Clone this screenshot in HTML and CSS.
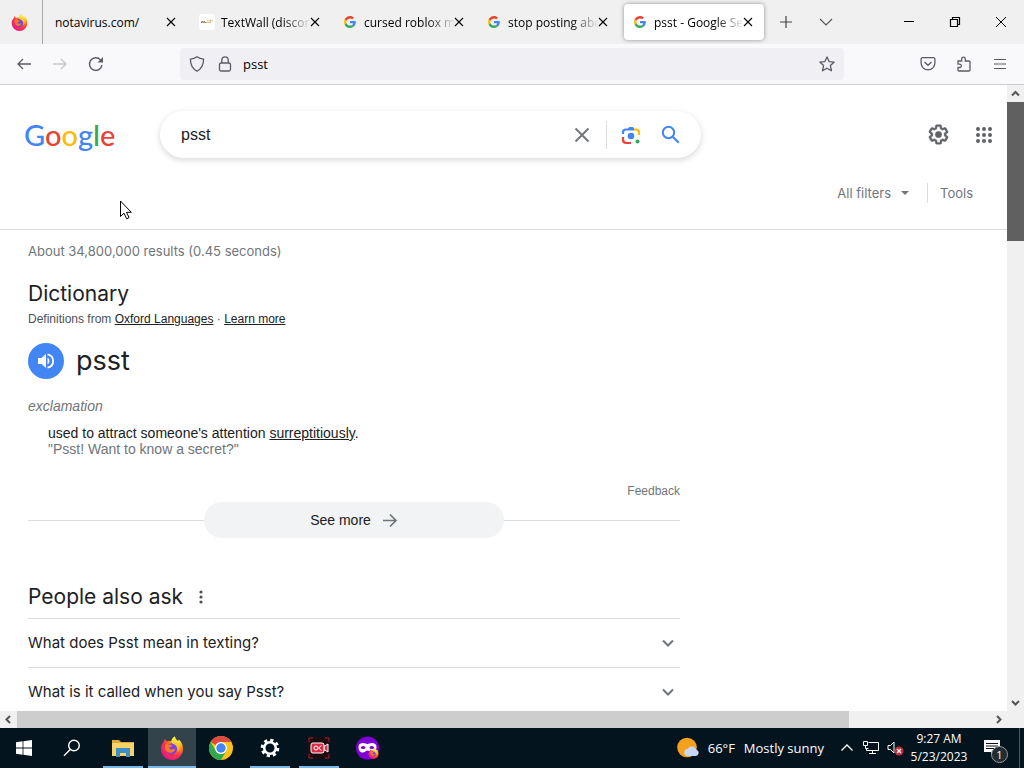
FILE: index.html
```
<!DOCTYPE html>
<html lang="en">
<head>
    <meta charset="utf-8">
    <title>psst - Google Search</title>
    <link rel="stylesheet" href="styles.css">
</head>
<body>
    <svg class="defs" aria-hidden="true">
        <defs>
            <radialGradient id="fox-body" cx="75%" cy="20%" r="90%">
                <stop offset="0" stop-color="#fff44f"/>
                <stop offset="0.35" stop-color="#ff980e"/>
                <stop offset="0.65" stop-color="#ff3647"/>
                <stop offset="1" stop-color="#e31587"/>
            </radialGradient>
            <linearGradient id="fox-flame" x1="0" y1="0" x2="0" y2="1">
                <stop offset="0" stop-color="#fff44f"/>
                <stop offset="1" stop-color="#ff980e"/>
            </linearGradient>
        </defs>
        <symbol id="close" viewBox="0 0 16 16"><path d="M4 4l8 8M12 4l-8 8" fill="none" stroke="currentColor" stroke-width="1.1"/></symbol>
        <symbol id="g" viewBox="0 0 48 48">
            <path fill="#ea4335" d="M24 9.5c3.54 0 6.71 1.22 9.21 3.6l6.85-6.85C35.9 2.38 30.47 0 24 0 14.62 0 6.51 5.38 2.56 13.22l7.98 6.19C12.43 13.72 17.74 9.5 24 9.5z"/>
            <path fill="#4285f4" d="M46.98 24.55c0-1.57-.15-3.09-.38-4.55H24v9.02h12.94c-.58 2.96-2.26 5.48-4.78 7.18l7.73 6c4.51-4.18 7.09-10.36 7.09-17.65z"/>
            <path fill="#fbbc05" d="M10.53 28.59c-.48-1.45-.76-2.99-.76-4.59s.27-3.14.76-4.59l-7.98-6.19C.92 16.46 0 20.12 0 24c0 3.88.92 7.54 2.56 10.78l7.97-6.19z"/>
            <path fill="#34a853" d="M24 48c6.48 0 11.93-2.13 15.89-5.81l-7.73-6c-2.15 1.45-4.92 2.3-8.16 2.3-6.26 0-11.57-4.22-13.47-9.91l-7.98 6.19C6.51 42.62 14.62 48 24 48z"/>
        </symbol>
        <symbol id="firefox" viewBox="0 0 24 24">
            <path fill="url(#fox-body)" d="M1 13C1 9 2.500 7 4 5.500l.5-2.500C5.500 3.500 6.500 4.500 7 5.500c1.500-.5 3-.6 4.500-.4C11.500 3 13 1.500 15 .5c0 2 1.500 3.200 3 4.500l1-1.500c3 3 4 6 4 9.500a11 11 0 0 1-22 0z"/>
            <circle cx="11.500" cy="12.800" r="5.600" fill="#7542e5"/>
            <path fill="url(#fox-flame)" d="M15 .5c0 2.500 1.500 3.500 3 5.500 2.500 3 2 8-.5 10.500 1-4-1-7.500-4-8.500-2-1-2.500-2-2-2.900C11.500 3 13 1.500 15 .5z"/>
            <path fill="#ff7a20" d="M5 8.500c2-.8 4 .2 5.500.2 2 0 2 1 1.500 1.600-.8.8-2 .7-2.600 1.300-.5.700.3 2 1.800 2 1.500.1 2.400-1 3.800-.4-.4 2-2.200 3.800-4.800 3.600C6.500 16.500 4.500 13 5 8.500z"/>
        </symbol>
        <symbol id="chevron" viewBox="0 0 16 16"><path d="M3 5.500l5 5 5-5" fill="none" stroke="currentColor" stroke-width="2"/></symbol>
        <symbol id="gear" viewBox="0 0 24 24"><path fill="currentColor" stroke="currentColor" stroke-width=".4" d="M13.850 22.250h-3.700c-.740 0-1.360-.540-1.450-1.270l-.27-1.890c-.27-.14-.53-.29-.79-.46l-1.800.720c-.7.260-1.470-.03-1.810-.65L2.200 15.530c-.35-.66-.2-1.440.36-1.880l1.530-1.190c-.01-.15-.02-.3-.02-.46 0-.15.010-.31.020-.46l-1.520-1.190c-.59-.45-.74-1.260-.37-1.880l1.850-3.190c.34-.62 1.110-.9 1.790-.63l1.810.73c.26-.17.520-.32.780-.46l.27-1.910c.09-.7.710-1.250 1.440-1.250h3.700c.74 0 1.360.540 1.450 1.270l.27 1.890c.27.140.53.290.79.460l1.800-.72c.71-.26 1.480.030 1.820.65l1.840 3.180c.36.660.2 1.440-.36 1.880l-1.520 1.190c.01.150.020.300.020.460s-.01.310-.02.460l1.520 1.190c.56.450.72 1.230.370 1.860l-1.860 3.220c-.34.620-1.110.900-1.800.630l-1.800-.72c-.26.170-.52.320-.78.460l-.27 1.910c-.1.680-.72 1.220-1.460 1.220zm-3.230-2h2.760l.37-2.550.53-.22c.44-.18.880-.44 1.340-.78l.45-.34 2.380.96 1.380-2.400-2.030-1.580.07-.56c.03-.26.060-.51.060-.78s-.03-.53-.06-.78l-.07-.56 2.030-1.580-1.390-2.400-2.390.96-.45-.35c-.42-.32-.87-.58-1.330-.77l-.52-.22-.37-2.550h-2.760l-.37 2.550-.53.210c-.44.190-.88.440-1.340.79l-.45.330-2.380-.95-1.390 2.390 2.030 1.580-.07.560a7 7 0 0 0-.06.790c0 .260.020.530.060.780l.07.560-2.030 1.580 1.380 2.400 2.390-.96.450.350c.43.330.86.580 1.330.770l.53.220z"/><circle cx="12" cy="12" r="3.500" fill="currentColor"/></symbol>
    </svg>

    <!-- tab strip -->
    <header class="tabs">
        <button class="pinned" aria-label="Firefox View"><svg width="17" height="17"><use href="#firefox"/></svg></button>
        <div class="tab"><span class="title">notavirus.com/</span><button class="x" aria-label="Close tab"><svg width="16" height="16"><use href="#close"/></svg></button></div>
        <div class="tab">
            <svg class="fav" viewBox="0 0 16 16"><rect width="16" height="16" rx="3" fill="#fff"/><path d="M2 8.500h5M2.500 7.500h4" stroke="#8a7458" stroke-dasharray="1.500 .6"/><path d="M7 8.500h4M8 7h4M11.500 5.500v4M13 6v2" stroke="#d7b577" stroke-dasharray="1.500 .5"/></svg>
            <span class="title fade">TextWall (discon</span><button class="x" aria-label="Close tab"><svg width="16" height="16"><use href="#close"/></svg></button>
        </div>
        <div class="tab"><svg class="fav g"><use href="#g"/></svg><span class="title fade">cursed roblox m</span><button class="x" aria-label="Close tab"><svg width="16" height="16"><use href="#close"/></svg></button></div>
        <div class="tab"><svg class="fav g"><use href="#g"/></svg><span class="title fade">stop posting abo</span><button class="x" aria-label="Close tab"><svg width="16" height="16"><use href="#close"/></svg></button></div>
        <div class="tab active"><svg class="fav g"><use href="#g"/></svg><span class="title fade">psst - Google Se</span><button class="x" aria-label="Close tab"><svg width="16" height="16"><use href="#close"/></svg></button></div>
        <button class="strip-btn" aria-label="New tab"><svg width="16" height="16" viewBox="0 0 16 16"><path d="M8 2v12M2 8h12" stroke="#444" stroke-width="1.200"/></svg></button>
        <button class="strip-btn" aria-label="List all tabs"><svg width="16" height="16" viewBox="0 0 16 16"><path d="M2 5l6 6 6-6" fill="none" stroke="#555" stroke-width="1.200"/></svg></button>
        <div class="window-btns">
            <button aria-label="Minimize"><svg width="12" height="12" viewBox="0 0 12 12"><path d="M1 5.500h10" stroke="#000"/></svg></button>
            <button aria-label="Restore"><svg width="12" height="12" viewBox="0 0 12 12"><path d="M1.500 3.500h7v7h-7zM3.500 3.500v-2h7v7h-2" fill="none" stroke="#000" stroke-width="1.200"/></svg></button>
            <button aria-label="Close"><svg width="12" height="12" viewBox="0 0 12 12"><path d="M1 1l10 10M11 1L1 11" stroke="#000"/></svg></button>
        </div>
    </header>

    <!-- navigation bar -->
    <nav class="toolbar">
        <button aria-label="Back"><svg width="16" height="16" viewBox="0 0 16 16"><path d="M15 8H2M7 3L2 8l5 5" fill="none" stroke="#5b5b66" stroke-width="1.300"/></svg></button>
        <button aria-label="Forward" disabled><svg width="16" height="16" viewBox="0 0 16 16"><path d="M1 8h13M9 3l5 5-5 5" fill="none" stroke="#c8c8cc" stroke-width="1.300"/></svg></button>
        <button aria-label="Reload"><svg width="16" height="16" viewBox="0 0 16 16"><path d="M14 9a6.300 6.300 0 1 1-1.600-5.200" fill="none" stroke="#5b5b66" stroke-width="1.400"/><path d="M15 1v5.500H9.500z" fill="#5b5b66"/></svg></button>
        <div class="urlbar">
            <svg width="16" height="16" viewBox="0 0 16 16"><path d="M8 .8c2 1.500 4.300 2.200 6.600 2.300 0 5.500-1.600 9.500-6.600 12.200C3 12.600 1.400 8.600 1.400 3.100 3.700 3 6 2.300 8 .8z" fill="none" stroke="#5b5b66" stroke-width="1.300"/></svg>
            <svg width="16" height="16" viewBox="0 0 16 16"><rect x="2.500" y="7" width="11" height="8" rx="1.500" fill="none" stroke="#5b5b66" stroke-width="1.300"/><path d="M4.800 7V4a3.200 3.200 0 0 1 6.400 0v3" fill="none" stroke="#5b5b66" stroke-width="1.300"/></svg>
            <input class="url" type="text" value="psst" aria-label="Address">
            <svg width="16" height="16" viewBox="0 0 16 16"><path d="M8 .9l2.100 4.700 5.100.5-3.800 3.500 1.100 5.200L8 12.200l-4.500 2.600 1.100-5.200L.8 6.100l5.100-.5z" fill="none" stroke="#5b5b66" stroke-width="1.300" stroke-linejoin="round"/></svg>
        </div>
        <button aria-label="Save to Pocket"><svg width="16" height="16" viewBox="0 0 16 16"><path d="M2.500 1.700h11a1.400 1.400 0 0 1 1.400 1.400V7a6.900 6.900 0 0 1-13.800 0V3.100a1.400 1.400 0 0 1 1.400-1.400zM4.500 6L8 9.300 11.500 6" fill="none" stroke="#5b5b66" stroke-width="1.300"/></svg></button>
        <button aria-label="Extensions"><svg width="16" height="16" viewBox="0 0 16 16"><path d="M2 5h3.700V3a1.800 1.800 0 0 1 3.600 0v2H13a1 1 0 0 1 1 1v8a1 1 0 0 1-1 1H3a1 1 0 0 1-1-1v-2.500h1.700a1.700 1.700 0 0 0 0-3.400H2z" fill="none" stroke="#5b5b66" stroke-width="1.300"/></svg></button>
        <button aria-label="Menu"><svg width="16" height="16" viewBox="0 0 16 16"><path d="M2 3.500h12M2 8h12M2 12.500h12" stroke="#5b5b66" stroke-width="1.200"/></svg></button>
    </nav>

    <div class="viewport">
        <main class="page">
            <div class="top">
                <div class="search-row">
                    <a class="logo" href="#"><span class="blue">G</span><span class="red">o</span><span class="yellow">o</span><span class="blue">g</span><span class="green">l</span><span class="red">e</span></a>
                    <form class="search">
                        <input type="text" value="psst" aria-label="Search">
                        <button type="reset" aria-label="Clear"><svg width="24" height="24" viewBox="0 0 24 24"><path d="M5.500 5.500l13 13M18.500 5.500l-13 13" stroke="#70757a" stroke-width="1.900"/></svg></button>
                        <span class="sep"></span>
                        <button type="button" aria-label="Search by image"><svg width="20" height="20" viewBox="0 0 20 20" fill="none" stroke-width="2.200"><path d="M2 9V7.500C2 5.500 3.200 4.500 5 4.500h8" stroke="#4285f4"/><path d="M6.500 4.500L8 2h4l1.500 2.500z" fill="#4285f4"/><path d="M13 4.500h1.800C17 4.500 18 5.700 18 7.500V10" stroke="#fbbc04"/><path d="M2 12v2.500C2 17 3.200 18 5.500 18H10" stroke="#ea4335"/><circle cx="10" cy="11" r="3.300" fill="#4285f4"/><circle cx="16.500" cy="16.500" r="2" fill="#34a853"/></svg></button>
                        <button aria-label="Search"><svg width="20" height="20" viewBox="0 0 20 20"><circle cx="7.500" cy="7.500" r="5.700" fill="none" stroke="#4285f4" stroke-width="2"/><path d="M11.700 11.700l6 6" stroke="#4285f4" stroke-width="2.200"/></svg></button>
                    </form>
                    <div class="account">
                        <button aria-label="Settings"><svg width="23" height="23"><use href="#gear"/></svg></button>
                        <button aria-label="Google apps"><svg width="24" height="24" viewBox="0 0 24 24" fill="#5f6368"><circle cx="6" cy="6" r="2"/><circle cx="12" cy="6" r="2"/><circle cx="18" cy="6" r="2"/><circle cx="6" cy="12" r="2"/><circle cx="12" cy="12" r="2"/><circle cx="18" cy="12" r="2"/><circle cx="6" cy="18" r="2"/><circle cx="12" cy="18" r="2"/><circle cx="18" cy="18" r="2"/></svg></button>
                    </div>
                </div>
                <div class="filters">
                    <button>All filters <svg width="8" height="4" viewBox="0 0 8 4"><path d="M0 0h8L4 4z" fill="#70757a"/></svg></button>
                    <span class="sep"></span>
                    <button>Tools</button>
                </div>
            </div>

            <div class="results">
                <p class="stats">About 34,800,000 results (0.45 seconds)</p>
                <h2>Dictionary</h2>
                <p class="source">Definitions from <a href="#">Oxford Languages</a> · <a href="#">Learn more</a></p>
                <div class="word">
                    <button aria-label="Listen"><svg width="18" height="18" viewBox="0 0 18 18"><path d="M1 6h3.500L9 2v14l-4.500-4H1z" fill="#fff"/><path d="M10.500 5.500c2.500 1.500 2.500 5.500 0 7z" fill="#fff"/><path d="M10.500 2.300c7.500 1.500 7.500 11.900 0 13.400" fill="none" stroke="#fff" stroke-width="1.800"/></svg></button>
                    <span>psst</span>
                </div>
                <p class="pos">exclamation</p>
                <p class="meaning">used to attract someone's attention <a href="#">surreptitiously</a>.</p>
                <p class="example">"Psst! Want to know a secret?"</p>
                <a class="feedback" href="#">Feedback</a>
                <div class="more">
                    <button>See more <svg width="16" height="16" viewBox="0 0 16 16"><path d="M1 8.500h13M8 2.500l6 6-6 6" fill="none" stroke="#70757a" stroke-width="1.700"/></svg></button>
                </div>
                <div class="ask-head">
                    <h2>People also ask</h2>
                    <button aria-label="About this result"><svg width="4" height="14" viewBox="0 0 4 14" fill="#4d5156"><circle cx="2" cy="2" r="1.600"/><circle cx="2" cy="7" r="1.600"/><circle cx="2" cy="12" r="1.600"/></svg></button>
                </div>
                <button class="question">What does Psst mean in texting? <svg width="16" height="16"><use href="#chevron"/></svg></button>
                <button class="question">What is it called when you say Psst? <svg width="16" height="16"><use href="#chevron"/></svg></button>
            </div>
        </main>
        <div class="vbar">
            <svg width="17" height="17" viewBox="0 0 17 17"><path d="M5 10.500L8.500 7l3.500 3.500" fill="none" stroke="#555" stroke-width="2"/></svg>
            <div class="track"><div class="thumb"></div></div>
            <svg width="17" height="17" viewBox="0 0 17 17"><path d="M5 7l3.500 3.500L12 7" fill="none" stroke="#555" stroke-width="2"/></svg>
        </div>
        <div class="hbar">
            <svg width="17" height="17" viewBox="0 0 17 17"><path d="M10 5L6.500 8.500 10 12" fill="none" stroke="#555" stroke-width="2"/></svg>
            <div class="track"><div class="thumb"></div></div>
            <svg width="17" height="17" viewBox="0 0 17 17"><path d="M7 5l3.500 3.500L7 12" fill="none" stroke="#555" stroke-width="2"/></svg>
        </div>
        <svg class="cursor" width="13" height="20" viewBox="0 0 13 20"><path d="M.5 1v15.500l3.500-3.300 2.700 5.600 2.400-1.200-2.600-5.300h4.800z" fill="#fff" stroke="#000"/></svg>
    </div>

    <footer class="taskbar">
        <button class="task" aria-label="Start"><svg width="16" height="16" viewBox="0 0 16 16" fill="#fff"><path d="M0 2.200L6.600 1.300v6.200H0zM7.400 1.200L16 0v7.500H7.400zM0 8.400h6.600v6.300L0 13.800zM7.400 8.400H16V16l-8.600-1.200z"/></svg></button>
        <button class="task" aria-label="Search"><svg width="18" height="18" viewBox="0 0 18 18" fill="none" stroke="#fff" stroke-width="1.400"><circle cx="11" cy="6.500" r="5.300"/><path d="M7.200 10.500L1 16.800"/></svg></button>
        <div class="apps">
            <button class="task open" aria-label="File Explorer"><svg width="22" height="20" viewBox="0 0 22 20"><path d="M0 2h7l2 2h13v14H0z" fill="#e0a836"/><path d="M0 5h22v13H0z" fill="#f8d36b"/><path d="M4 19v-9h14v9h-4v-4H8v4z" fill="#3b8fc6"/></svg></button>
            <button class="task open current" aria-label="Firefox"><svg width="24" height="24"><use href="#firefox"/></svg></button>
            <button class="task" aria-label="Chrome"><svg width="24" height="24" viewBox="0 0 24 24"><circle cx="12" cy="12" r="12" fill="#fbc116"/><path d="M1.600 6A12 12 0 0 1 22.400 6H12a6 6 0 0 0-5.200 3z" fill="#dd4b3e"/><path d="M1.600 6A12 12 0 0 0 12 24l5.200-9A6 6 0 0 1 6.800 15z" fill="#2da94f"/><circle cx="12" cy="12" r="6" fill="#fff"/><circle cx="12" cy="12" r="4.700" fill="#4285f4"/></svg></button>
            <button class="task open" aria-label="Settings"><svg width="20" height="20" viewBox="0 0 20 20"><circle cx="10" cy="10" r="5.800" fill="none" stroke="#fff" stroke-width="2.600"/><circle cx="10" cy="10" r="7.900" fill="none" stroke="#fff" stroke-width="2.800" stroke-dasharray="3.200 3"/></svg></button>
            <button class="task open" aria-label="Screen recorder"><svg width="22" height="22" viewBox="0 0 22 22"><path d="M0 0h22v22H0z" fill="#1c0b10"/><path d="M1 5V1h4M17 1h4v4M21 17v4h-4M5 21H1v-4" fill="none" stroke="#a4262c"/><path d="M16 9.500l4-2.500v8l-4-2.500z" fill="#d92b45" stroke="#fff"/><rect x="3" y="6" width="13" height="10" rx="2" fill="#d92b45" stroke="#fff"/><circle cx="8" cy="11" r="2" fill="none" stroke="#fff"/><path d="M13.500 8.500L10.500 11l3 2.500" fill="none" stroke="#fff"/></svg></button>
            <button class="task" aria-label="Firefox Private Browsing"><svg width="24" height="24" viewBox="0 0 24 24"><circle cx="11.500" cy="12" r="11.500" fill="#8000d7"/><path d="M2.500 11c0-3 2-4 4.500-4 2 0 3 1 4.500 1S14 7 16 7c2.500 0 4.500 1 4.500 4 0 3.500-1.500 5.500-4 5.500s-3.500-2-5-2-2.500 2-5 2-4-2-4-5.500z" fill="#fff"/><ellipse cx="7.200" cy="11.500" rx="2.300" ry="1.500" fill="#7a00cc"/><ellipse cx="15.800" cy="11.500" rx="2.300" ry="1.500" fill="#7a00cc"/><use href="#firefox" x="12" y="12" width="11" height="11"/></svg></button>
        </div>
        <div class="tray">
            <button class="weather"><svg width="22" height="22" viewBox="0 0 22 22"><circle cx="10" cy="10.500" r="9.800" fill="#f5a11d"/><path d="M11 19a3.500 3.500 0 0 1-.5-7 5 5 0 0 1 9 .8 3.200 3.200 0 0 1-.5 6.200z" fill="#c8d8f4"/></svg><span>66°F</span><span>Mostly sunny</span></button>
            <button aria-label="Show hidden icons"><svg width="14" height="14" viewBox="0 0 14 14"><path d="M1.500 9.500L7 4l5.500 5.500" fill="none" stroke="#fff" stroke-width="1.300"/></svg></button>
            <button aria-label="Network"><svg width="16" height="14" viewBox="0 0 16 14" fill="none" stroke="#fff"><path d="M5.500 1.500h10v8h-12V7M9.500 9.500v3M6 12.500h7M.5.5h4v4h-4zM2.500 4.500v3h3"/></svg></button>
            <button aria-label="Volume"><svg width="17" height="16" viewBox="0 0 17 16"><path d="M1 5.500h2.500L7 2v11L3.500 9.500H1z" fill="none" stroke="#fff"/><circle cx="12" cy="11" r="4.500" fill="#c42b38"/><path d="M10 9l4 4M14 9l-4 4" stroke="#fff" stroke-width="1.200"/></svg></button>
            <button class="clock"><span>9:27 AM</span><span>5/23/2023</span></button>
            <button class="notice" aria-label="Notifications"><svg width="16" height="16" viewBox="0 0 16 16"><path d="M0 0h16v12h-6l-3 3.500V12H0z" fill="#fff"/><path d="M2 3.500h12M2 6h12M2 8.500h8" stroke="#07141f"/></svg><span class="badge">1</span></button>
            <span class="peek"></span>
        </div>
    </footer>
</body>
</html>
```
FILE: styles.css
```
* { box-sizing: border-box; }
body {
    margin: 0; height: 100vh; overflow: hidden;
    display: flex; flex-direction: column;
    font-family: "Liberation Sans", Arial, sans-serif; font-size: 14px; color: #202124;
}
.defs { position: absolute; width: 0; height: 0; }
svg { display: block; flex: none; }
button {
    display: flex; align-items: center; justify-content: center;
    padding: 0; border: none; background: none; color: inherit; font: inherit;
}
input { min-width: 0; padding: 0; border: none; outline: none; background: none; color: inherit; font: inherit; }
p, h2 { margin: 0; font-weight: normal; }
a { color: inherit; }

/* browser chrome */
.tabs, .toolbar { font-family: "Open Sans", "Noto Sans", sans-serif; font-size: 12px; color: #000; }
.tabs { display: flex; align-items: center; height: 44px; flex: none; background: #f0f0f0; }
.pinned { width: 43px; height: 44px; margin-right: 1px; padding-right: 3px; border-right: 1px solid #aaa; }
.tab {
    display: flex; align-items: center; flex: 0 1 144px; min-width: 0;
    height: 36px; padding: 0 9px 0 11px;
}
.fav { width: 16px; height: 16px; margin-right: 6px; }
.fav.g { width: 12px; height: 12px; margin: 0 8px 0 1px; }
.title { flex: 1; min-width: 0; margin-right: -4px; overflow: hidden; white-space: nowrap; }
.fade {
    -webkit-mask-image: linear-gradient(to left, transparent, #000 28px);
    mask-image: linear-gradient(to left, transparent, #000 28px);
}
.tab.active {
    flex-basis: 140px; margin: 0 2px 0 4px; padding-left: 9px; padding-right: 8px;
    background: #fff; border-radius: 4px; box-shadow: 0 0 4px rgba(0, 0, 0, 0.4);
}
.strip-btn { width: 40px; height: 36px; }
.window-btns { display: flex; margin-left: auto; }
.window-btns button { width: 46px; height: 36px; }
.toolbar {
    display: flex; align-items: center; height: 41px; flex: none;
    padding: 0 6px; background: #f9f9fb; border-bottom: 1px solid #ccccd0;
}
.toolbar button { width: 36px; height: 32px; }
.urlbar {
    display: flex; align-items: center; flex: 1; gap: 12px;
    height: 32px; margin: 0 66px; padding: 0 9px; background: #f0f0f4; border-radius: 4px;
}
.url { flex: 1; margin-left: -2px; font-size: 13px; }

/* page and scrollbars */
.viewport {
    position: relative; flex: 1; min-height: 0;
    display: grid; grid-template-columns: minmax(0, 1fr) 17px; grid-template-rows: minmax(0, 1fr) 17px;
}
.page { overflow: hidden; background: #fff; }
.vbar { display: flex; flex-direction: column; background: #f0f0f0; }
.hbar { display: flex; background: #f0f0f0; }
.track { flex: 1; }
.vbar .thumb { height: 23.5%; background: #606060; }
.hbar .thumb { width: 85.5%; height: 17px; background: #cdcdcd; }
.viewport::after { content: ""; background: #f0f0f0; }
.cursor { position: absolute; left: 120px; top: 115px; }

.top { height: 145px; border-bottom: 1px solid #dadce0; }
.search-row { display: flex; align-items: center; padding: 26px 11px 0 24px; }
.logo { width: 136px; font: 500 29px/40px Lato, sans-serif; text-decoration: none; }
.blue { color: #4285f4; }
.red { color: #ea4335; }
.yellow { color: #fbbc05; }
.green { color: #34a853; }
.search {
    display: flex; align-items: center; flex: 0 1 541px; height: 47px; padding: 0 10px 0 21px;
    border-radius: 24px; box-shadow: 0 2px 5px 1px rgba(64, 60, 67, 0.16);
}
.search input { flex: 1; font-size: 16px; }
.search button { width: 40px; height: 40px; }
.sep { width: 1px; background: #dadce0; }
.search .sep { height: 28px; margin: 0 4px; }
.account { display: flex; gap: 22px; margin-left: auto; color: #5f6368; }
.account button { width: 24px; height: 24px; }
.filters {
    display: flex; align-items: center; justify-content: flex-end; gap: 12px;
    height: 24px; margin-top: 23px; padding-right: 34px;
    font-family: Inter, sans-serif; font-size: 13px; color: #70757a;
}
.filters button { gap: 10px; }
.filters button:first-child { padding-right: 6px; }
.filters .sep { height: 20px; }

.results { width: 652px; max-width: 100%; margin-left: 28px; }
.stats { padding-top: 11px; font: 13px/20px Inter, sans-serif; color: #70757a; }
h2 { font: 21px/28px Inter, sans-serif; }
.stats + h2 { margin-top: 19px; }
.source { margin-top: 3px; font-size: 12px; line-height: 16px; color: #4d5156; }
.source a { color: #202124; }
.word { display: flex; align-items: center; gap: 12px; margin-top: 16px; font: 27px/36px Inter, sans-serif; }
.word button { width: 36px; height: 36px; border-radius: 50%; background: #4285f4; }
.pos { margin-top: 19px; line-height: 16px; font-style: italic; color: #70757a; }
.meaning { margin: 11px 0 0 20px; line-height: 16px; }
.example { margin-left: 20px; line-height: 16px; color: #70757a; }
.feedback {
    display: block; margin-top: 26px; text-align: right;
    font-size: 12px; line-height: 16px; color: #70757a; text-decoration: none;
}
.more { display: flex; align-items: center; margin-top: 3px; }
.more::before, .more::after { content: ""; flex: 1; height: 1px; background: #dadce0; }
.more button { gap: 11px; width: 300px; height: 36px; border-radius: 18px; background: #f1f3f4; }
.ask-head { display: flex; align-items: center; gap: 16px; margin-top: 45px; padding-bottom: 7px; }
.question {
    justify-content: space-between; width: 100%; height: 49px; padding-right: 4px;
    border-top: 1px solid #dadce0; font: 15px/24px Inter, sans-serif;
}
.question svg { color: #70757a; }

/* taskbar */
.taskbar {
    display: flex; flex: none; height: 40px; background: #03141e;
    font-family: "Open Sans", "Noto Sans", sans-serif; font-size: 12px; color: #fff;
}
.task { position: relative; width: 48px; height: 40px; }
.apps { display: flex; gap: 1px; margin-left: 3px; }
.open::after { content: ""; position: absolute; left: 4px; right: 4px; bottom: 0; height: 2px; background: #76b9ed; }
.current { background: #33434c; }
.current::after { left: 0; right: 0; }
.tray { display: flex; margin-left: auto; }
.tray button { width: 24px; height: 40px; }
.tray .weather { width: auto; gap: 9px; margin-right: 11px; font-size: 13px; }
.tray .clock { flex-direction: column; width: 64px; line-height: 18px; }
.tray .notice { position: relative; width: 42px; }
.badge {
    position: absolute; left: 20px; top: 18px; width: 17px; height: 17px;
    border: 1px solid #999; border-radius: 50%; background: #222b32; font-size: 11px; line-height: 15px;
}
.peek { width: 11px; background: linear-gradient(to right, transparent 6px, #4a5560 6px, #4a5560 7px, transparent 7px); }
```
